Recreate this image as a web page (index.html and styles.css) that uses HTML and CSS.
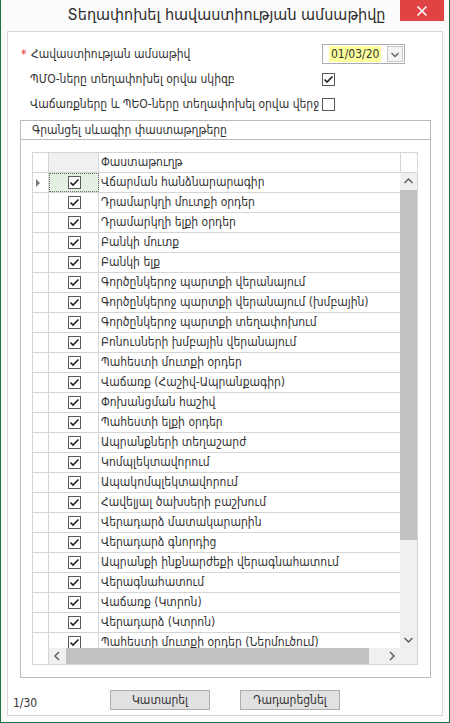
FILE: index.html
```html
<!DOCTYPE html>
<html lang="hy">
<head>
<meta charset="utf-8">
<title>Տեղափոխել հավաստիության ամսաթիվը</title>
<link rel="stylesheet" href="styles.css">
</head>
<body>
<div class="window">
  <div class="titlebar">
    <div class="title">Տեղափոխել հավաստիության ամսաթիվը</div>
    <div class="close"><svg width="12" height="12" viewBox="0 0 12 12"><path d="M1.5 1.5 L10.5 10.5 M10.5 1.5 L1.5 10.5" stroke="#fff" stroke-width="1.6" fill="none"/></svg></div>
  </div>
  <div class="panel">
    <div class="form">
      <div class="frow">
        <div class="flabel first"><span class="star">*</span>Հավաստիության ամսաթիվ</div>
        <div class="date"><span class="dval">01/03/20</span><span class="ddrop"><svg width="14" height="15" viewBox="0 0 14 15"><polyline points="3.5,6 7,9.5 10.5,6" stroke="#606060" stroke-width="1.3" fill="none"/></svg></span></div>
      </div>
      <div class="frow">
        <div class="flabel">ՊՄՕ-ները տեղափոխել օրվա սկիզբ</div>
        <span class="cb"><svg width="11" height="11" viewBox="0 0 11 11"><polyline points="1.5,5.5 4,8 9.5,2.5" stroke="#222" stroke-width="1.6" fill="none"/></svg></span>
      </div>
      <div class="frow">
        <div class="flabel">Վաճառքները և ՊԵՕ-ները տեղափոխել օրվա վերջ</div>
        <span class="cb"></span>
      </div>
    </div>
    <div class="group">
      <div class="ghead">Գրանցել սևագիր փաստաթղթերը</div>
      <div class="grid">
        <div class="ghdr">
          <div class="h-rh"></div>
          <div class="h-cb"></div>
          <div class="h-tx">Փաստաթուղթ</div>
          <div class="h-sb"></div>
        </div>
        <div class="gbody">
          <div class="rows">
            <div class="row current"><div class="rh"><span class="tri"></span></div><div class="cbc"><span class="cb"><svg width="11" height="11" viewBox="0 0 11 11"><polyline points="1.5,5.5 4,8 9.5,2.5" stroke="#222" stroke-width="1.6" fill="none"/></svg></span></div><div class="tx">Վճարման հանձնարարագիր</div></div>
            <div class="row"><div class="rh"></div><div class="cbc"><span class="cb"><svg width="11" height="11" viewBox="0 0 11 11"><polyline points="1.5,5.5 4,8 9.5,2.5" stroke="#222" stroke-width="1.6" fill="none"/></svg></span></div><div class="tx">Դրամարկղի մուտքի օրդեր</div></div>
            <div class="row"><div class="rh"></div><div class="cbc"><span class="cb"><svg width="11" height="11" viewBox="0 0 11 11"><polyline points="1.5,5.5 4,8 9.5,2.5" stroke="#222" stroke-width="1.6" fill="none"/></svg></span></div><div class="tx">Դրամարկղի ելքի օրդեր</div></div>
            <div class="row"><div class="rh"></div><div class="cbc"><span class="cb"><svg width="11" height="11" viewBox="0 0 11 11"><polyline points="1.5,5.5 4,8 9.5,2.5" stroke="#222" stroke-width="1.6" fill="none"/></svg></span></div><div class="tx">Բանկի մուտք</div></div>
            <div class="row"><div class="rh"></div><div class="cbc"><span class="cb"><svg width="11" height="11" viewBox="0 0 11 11"><polyline points="1.5,5.5 4,8 9.5,2.5" stroke="#222" stroke-width="1.6" fill="none"/></svg></span></div><div class="tx">Բանկի ելք</div></div>
            <div class="row"><div class="rh"></div><div class="cbc"><span class="cb"><svg width="11" height="11" viewBox="0 0 11 11"><polyline points="1.5,5.5 4,8 9.5,2.5" stroke="#222" stroke-width="1.6" fill="none"/></svg></span></div><div class="tx">Գործընկերոջ պարտքի վերանայում</div></div>
            <div class="row"><div class="rh"></div><div class="cbc"><span class="cb"><svg width="11" height="11" viewBox="0 0 11 11"><polyline points="1.5,5.5 4,8 9.5,2.5" stroke="#222" stroke-width="1.6" fill="none"/></svg></span></div><div class="tx">Գործընկերոջ պարտքի վերանայում (խմբային)</div></div>
            <div class="row"><div class="rh"></div><div class="cbc"><span class="cb"><svg width="11" height="11" viewBox="0 0 11 11"><polyline points="1.5,5.5 4,8 9.5,2.5" stroke="#222" stroke-width="1.6" fill="none"/></svg></span></div><div class="tx">Գործընկերոջ պարտքի տեղափոխում</div></div>
            <div class="row"><div class="rh"></div><div class="cbc"><span class="cb"><svg width="11" height="11" viewBox="0 0 11 11"><polyline points="1.5,5.5 4,8 9.5,2.5" stroke="#222" stroke-width="1.6" fill="none"/></svg></span></div><div class="tx">Բոնուսների խմբային վերանայում</div></div>
            <div class="row"><div class="rh"></div><div class="cbc"><span class="cb"><svg width="11" height="11" viewBox="0 0 11 11"><polyline points="1.5,5.5 4,8 9.5,2.5" stroke="#222" stroke-width="1.6" fill="none"/></svg></span></div><div class="tx">Պահեստի մուտքի օրդեր</div></div>
            <div class="row"><div class="rh"></div><div class="cbc"><span class="cb"><svg width="11" height="11" viewBox="0 0 11 11"><polyline points="1.5,5.5 4,8 9.5,2.5" stroke="#222" stroke-width="1.6" fill="none"/></svg></span></div><div class="tx">Վաճառք (Հաշիվ-Ապրանքագիր)</div></div>
            <div class="row"><div class="rh"></div><div class="cbc"><span class="cb"><svg width="11" height="11" viewBox="0 0 11 11"><polyline points="1.5,5.5 4,8 9.5,2.5" stroke="#222" stroke-width="1.6" fill="none"/></svg></span></div><div class="tx">Փոխանցման հաշիվ</div></div>
            <div class="row"><div class="rh"></div><div class="cbc"><span class="cb"><svg width="11" height="11" viewBox="0 0 11 11"><polyline points="1.5,5.5 4,8 9.5,2.5" stroke="#222" stroke-width="1.6" fill="none"/></svg></span></div><div class="tx">Պահեստի ելքի օրդեր</div></div>
            <div class="row"><div class="rh"></div><div class="cbc"><span class="cb"><svg width="11" height="11" viewBox="0 0 11 11"><polyline points="1.5,5.5 4,8 9.5,2.5" stroke="#222" stroke-width="1.6" fill="none"/></svg></span></div><div class="tx">Ապրանքների տեղաշարժ</div></div>
            <div class="row"><div class="rh"></div><div class="cbc"><span class="cb"><svg width="11" height="11" viewBox="0 0 11 11"><polyline points="1.5,5.5 4,8 9.5,2.5" stroke="#222" stroke-width="1.6" fill="none"/></svg></span></div><div class="tx">Կոմպլեկտավորում</div></div>
            <div class="row"><div class="rh"></div><div class="cbc"><span class="cb"><svg width="11" height="11" viewBox="0 0 11 11"><polyline points="1.5,5.5 4,8 9.5,2.5" stroke="#222" stroke-width="1.6" fill="none"/></svg></span></div><div class="tx">Ապակոմպլեկտավորում</div></div>
            <div class="row"><div class="rh"></div><div class="cbc"><span class="cb"><svg width="11" height="11" viewBox="0 0 11 11"><polyline points="1.5,5.5 4,8 9.5,2.5" stroke="#222" stroke-width="1.6" fill="none"/></svg></span></div><div class="tx">Հավելյալ ծախսերի բաշխում</div></div>
            <div class="row"><div class="rh"></div><div class="cbc"><span class="cb"><svg width="11" height="11" viewBox="0 0 11 11"><polyline points="1.5,5.5 4,8 9.5,2.5" stroke="#222" stroke-width="1.6" fill="none"/></svg></span></div><div class="tx">Վերադարձ մատակարարին</div></div>
            <div class="row"><div class="rh"></div><div class="cbc"><span class="cb"><svg width="11" height="11" viewBox="0 0 11 11"><polyline points="1.5,5.5 4,8 9.5,2.5" stroke="#222" stroke-width="1.6" fill="none"/></svg></span></div><div class="tx">Վերադարձ գնորդից</div></div>
            <div class="row"><div class="rh"></div><div class="cbc"><span class="cb"><svg width="11" height="11" viewBox="0 0 11 11"><polyline points="1.5,5.5 4,8 9.5,2.5" stroke="#222" stroke-width="1.6" fill="none"/></svg></span></div><div class="tx">Ապրանքի ինքնարժեքի վերագնահատում</div></div>
            <div class="row"><div class="rh"></div><div class="cbc"><span class="cb"><svg width="11" height="11" viewBox="0 0 11 11"><polyline points="1.5,5.5 4,8 9.5,2.5" stroke="#222" stroke-width="1.6" fill="none"/></svg></span></div><div class="tx">Վերագնահատում</div></div>
            <div class="row"><div class="rh"></div><div class="cbc"><span class="cb"><svg width="11" height="11" viewBox="0 0 11 11"><polyline points="1.5,5.5 4,8 9.5,2.5" stroke="#222" stroke-width="1.6" fill="none"/></svg></span></div><div class="tx">Վաճառք (Կտրոն)</div></div>
            <div class="row"><div class="rh"></div><div class="cbc"><span class="cb"><svg width="11" height="11" viewBox="0 0 11 11"><polyline points="1.5,5.5 4,8 9.5,2.5" stroke="#222" stroke-width="1.6" fill="none"/></svg></span></div><div class="tx">Վերադարձ (Կտրոն)</div></div>
            <div class="row"><div class="rh"></div><div class="cbc"><span class="cb"><svg width="11" height="11" viewBox="0 0 11 11"><polyline points="1.5,5.5 4,8 9.5,2.5" stroke="#222" stroke-width="1.6" fill="none"/></svg></span></div><div class="tx">Պահեստի մուտքի օրդեր (Ներմուծում)</div></div>
          </div>
          <div class="vscroll">
            <div class="sbtn"><svg width="17" height="17" viewBox="0 0 17 17"><polyline points="4.5,10 8.5,6 12.5,10" stroke="#606060" stroke-width="1.5" fill="none"/></svg></div>
            <div class="vthumb"></div>
            <div class="strack"></div>
            <div class="sbtn"><svg width="17" height="17" viewBox="0 0 17 17"><polyline points="4.5,7 8.5,11 12.5,7" stroke="#606060" stroke-width="1.5" fill="none"/></svg></div>
          </div>
        </div>
        <div class="gfoot">
          <div class="frh"></div>
          <div class="hscroll">
            <div class="hbtn"><svg width="17" height="16" viewBox="0 0 17 16"><polyline points="10,4 6,8 10,12" stroke="#606060" stroke-width="1.5" fill="none"/></svg></div>
            <div class="hthumb"></div>
            <div class="strack"></div>
            <div class="hbtn"><svg width="17" height="16" viewBox="0 0 17 16"><polyline points="7,4 11,8 7,12" stroke="#606060" stroke-width="1.5" fill="none"/></svg></div>
          </div>
          <div class="corner"></div>
        </div>
      </div>
    </div>
    <div class="footer">
      <span class="count">1/30</span>
      <button class="btn">Կատարել</button>
      <button class="btn">Դադարեցնել</button>
    </div>
  </div>
</div>
</body>
</html>
```

FILE: styles.css
```css
html, body {
  margin: 0;
  padding: 0;
  background: #fbfbfb;
}
body {
  font-family: "DejaVu Sans Condensed", "DejaVu Sans", sans-serif;
  font-size: 12px;
  color: #333;
}
.window {
  width: 450px;
  height: 723px;
  box-sizing: border-box;
  border: 1px solid #217346;
  border-top: 0;
  background: #fbfbfb;
  display: flex;
  flex-direction: column;
}
.titlebar {
  position: relative;
  height: 31px;
  flex: none;
  display: flex;
  align-items: center;
  justify-content: center;
}
.title {
  font-size: 16px;
  color: #2b2b2b;
  padding-left: 3px;
  margin-top: -2px;
}
.close {
  position: absolute;
  top: 0;
  right: 5px;
  width: 44px;
  height: 21px;
  background: #e04343;
  display: flex;
  align-items: center;
  justify-content: center;
}
.panel {
  flex: 1;
  margin: 0 6px 6px;
  border: 1px solid #d6d6d6;
  background: #fff;
  display: flex;
  flex-direction: column;
}
.form {
  padding: 12px 0 0 13px;
}
.frow {
  display: flex;
  align-items: center;
  height: 20px;
}
.frow + .frow {
  margin-top: 5px;
}
.flabel {
  width: 292px;
  padding-left: 9px;
  white-space: nowrap;
}
.flabel.first {
  padding-left: 0;
  width: 301px;
}
.star {
  display: inline-block;
  width: 10px;
  color: #e53935;
}
.date {
  width: 83px;
  height: 20px;
  box-sizing: border-box;
  border: 1px solid #abadb3;
  display: flex;
  align-items: center;
}
.dval {
  margin-left: 6px;
  background: #ffff9c;
  padding: 1px 2px;
  line-height: 14px;
}
.ddrop {
  margin-left: auto;
  margin-right: 1px;
  width: 16px;
  height: 16px;
  box-sizing: border-box;
  border: 1px solid #c9c9c9;
  background: #f4f4f4;
  display: flex;
  align-items: center;
  justify-content: center;
}
.cb {
  width: 13px;
  height: 13px;
  box-sizing: border-box;
  border: 1px solid #5a5a5a;
  background: #fff;
  display: flex;
  align-items: center;
  justify-content: center;
}
.group {
  margin: 6px 11px 0 12px;
  height: 558px;
  box-sizing: border-box;
  border: 1px solid #b9b9b9;
  display: flex;
  flex-direction: column;
  flex: none;
}
.ghead {
  height: 18px;
  line-height: 18px;
  border-bottom: 1px solid #b9b9b9;
  padding-left: 11px;
  white-space: nowrap;
}
.grid {
  margin: 12px 12px 0 11px;
  border: 1px solid #d5d5d5;
  display: flex;
  flex-direction: column;
}
.ghdr {
  display: flex;
  height: 20px;
  box-sizing: border-box;
  border-bottom: 1px solid #d5d5d5;
}
.h-rh {
  width: 16px;
  box-sizing: border-box;
  border-right: 1px solid #d5d5d5;
}
.h-cb {
  width: 50px;
  box-sizing: border-box;
  border-right: 1px solid #d5d5d5;
  background: #f0f0f0;
}
.h-tx {
  width: 302px;
  box-sizing: border-box;
  border-right: 1px solid #d5d5d5;
  padding-left: 2px;
  line-height: 19px;
}
.h-sb {
  width: 16px;
}
.gbody {
  display: flex;
  height: 475px;
}
.rows {
  width: 367px;
  overflow: hidden;
}
.row {
  display: flex;
  height: 20px;
  box-sizing: border-box;
  border-bottom: 1px solid #d5d5d5;
}
.rh {
  width: 16px;
  box-sizing: border-box;
  border-right: 1px solid #d5d5d5;
  display: flex;
  align-items: center;
}
.tri {
  margin-left: 3px;
  width: 0;
  height: 0;
  border-left: 4px solid #7a7a7a;
  border-top: 4px solid transparent;
  border-bottom: 4px solid transparent;
}
.cbc {
  width: 50px;
  box-sizing: border-box;
  border-right: 1px solid #d5d5d5;
  display: flex;
  align-items: center;
  padding-left: 19px;
}
.row.current .cbc {
  background: #e3f0e2;
  outline: 1px dotted #6a6a6a;
  outline-offset: -1px;
}
.tx {
  width: 301px;
  padding-left: 2px;
  box-sizing: border-box;
  white-space: nowrap;
  overflow: hidden;
  line-height: 19px;
}
.vscroll {
  width: 17px;
  background: #f0f0f0;
  display: flex;
  flex-direction: column;
}
.sbtn {
  height: 17px;
  flex: none;
  display: flex;
}
.vthumb {
  height: 350px;
  flex: none;
  background: #c1c1c1;
}
.strack {
  flex: 1;
}
.gfoot {
  display: flex;
  height: 16px;
}
.frh {
  width: 16px;
  box-sizing: border-box;
  border-right: 1px solid #d5d5d5;
  background: #fff;
}
.hscroll {
  width: 351px;
  background: #f0f0f0;
  display: flex;
}
.hbtn {
  width: 17px;
  flex: none;
  display: flex;
}
.hthumb {
  width: 303px;
  flex: none;
  background: #c1c1c1;
}
.corner {
  width: 17px;
  background: #f0f0f0;
}
.footer {
  display: flex;
  align-items: center;
  padding: 12px 0 0 5px;
}
.count {
  width: 97px;
  margin-top: 5px;
}
.btn {
  width: 100px;
  height: 20px;
  box-sizing: border-box;
  border: 1px solid #adadad;
  background: #e1e1e1;
  font: inherit;
  color: #333;
  padding: 0;
}
.btn + .btn {
  margin-left: 30px;
}
```
